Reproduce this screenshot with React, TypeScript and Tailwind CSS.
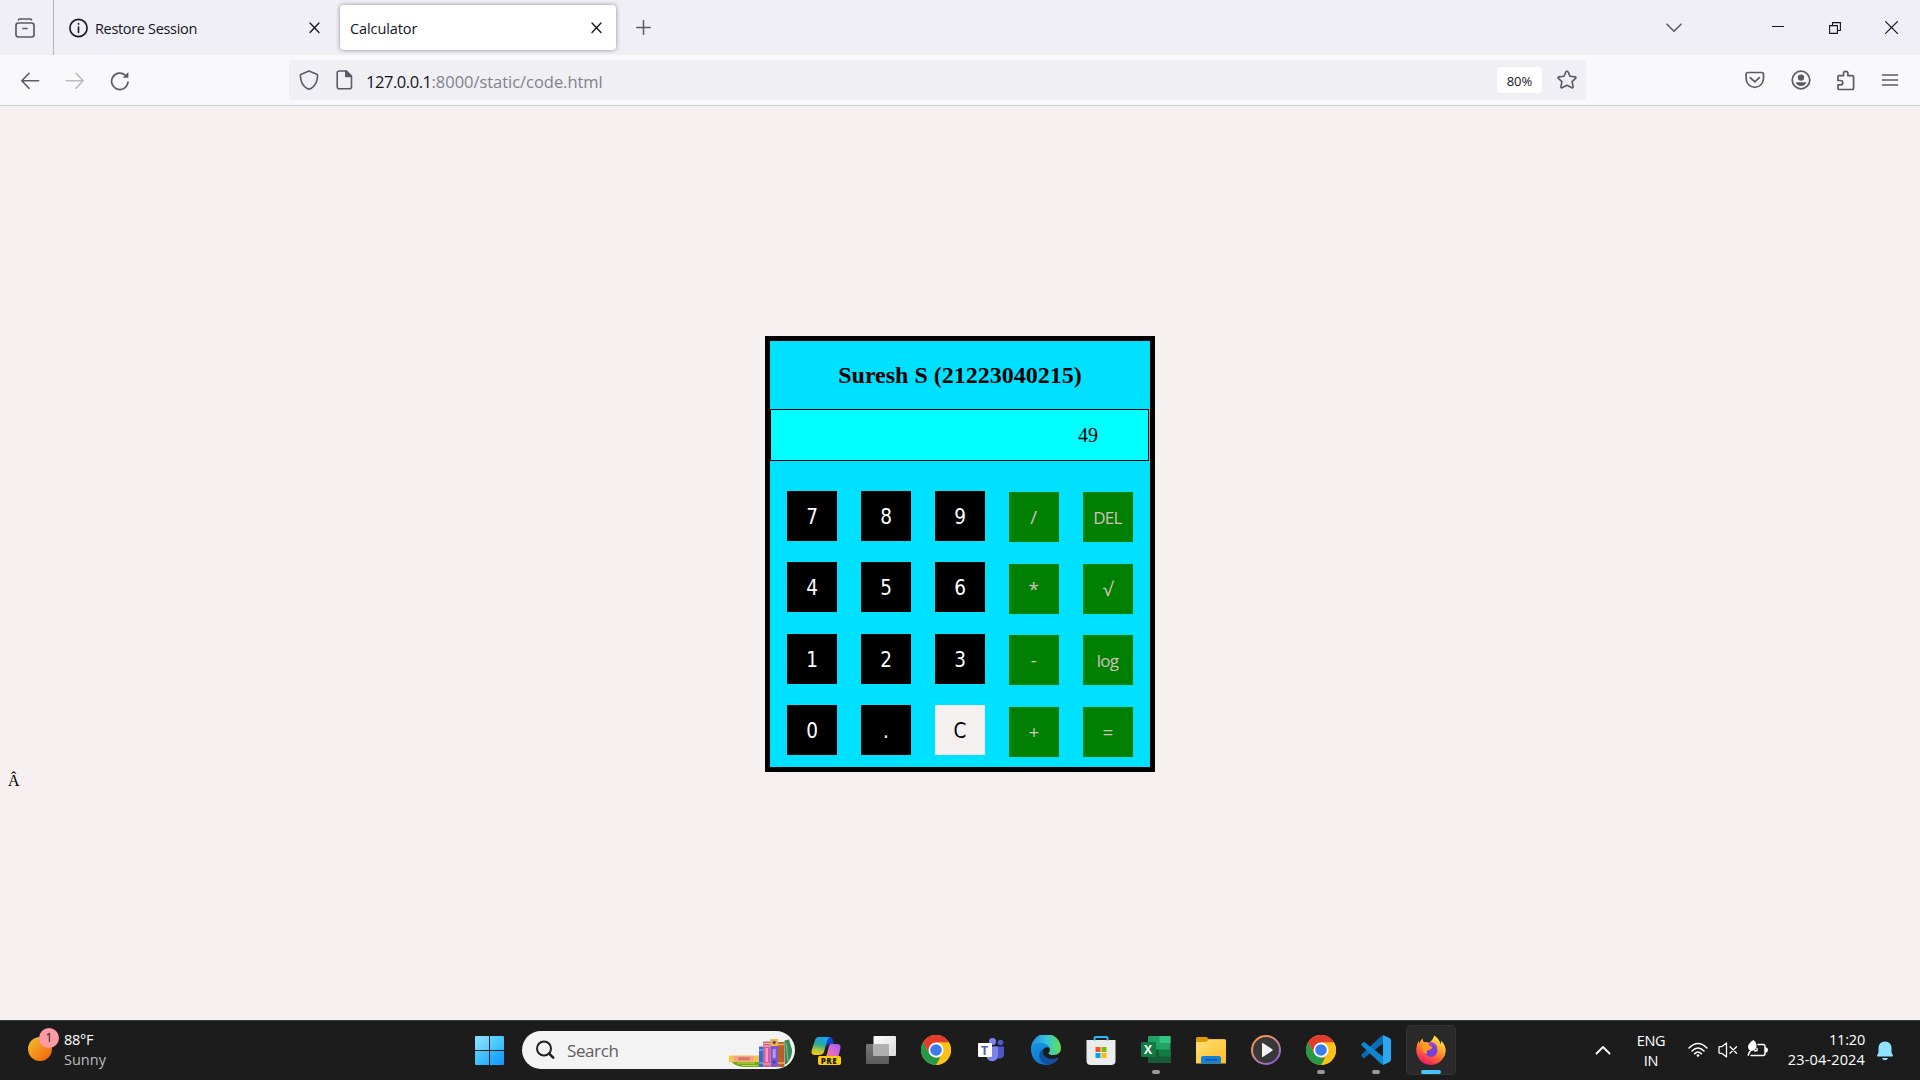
import React from "react";

type IconProps = { w: number; h: number; className?: string; children: React.ReactNode; sw?: number };

function Icon({ w, h, className = "", children, sw = 1.5 }: IconProps) {
  return (
    <svg
      width={w}
      height={h}
      viewBox={`0 0 ${w} ${h}`}
      className={`block shrink-0 ${className}`}
      fill="none"
      stroke="currentColor"
      strokeWidth={sw}
      strokeLinecap="round"
      strokeLinejoin="round"
    >
      {children}
    </svg>
  );
}

function CloseIcon({ className }: { className: string }) {
  return (
    <Icon w={12} h={12} className={className} sw={1.3}>
      <path d="M1 1l9 9.500M10 1l-9 9.500" />
    </Icon>
  );
}

function TabStrip() {
  return (
    <div className="flex h-[55px] bg-[#f0eff5] text-[#15141a]">
      <div className="flex w-[54px] items-center border-r border-[#b4b3bb] pl-[15px] text-[#5b5b66]">
        <Icon w={20} h={20} sw={1.7}>
          <path d="M3.5 1.8q.3-.8 1.2-.8h10.6q.9 0 1.2.8" />
          <rect x="1" y="5" width="18" height="14" rx="2.4" />
          <path d="M8 10.5h4" />
        </Icon>
      </div>
      <div className="flex w-[282px] items-center pl-[15px]">
        <Icon w={20} h={20} sw={1.6}>
          <circle cx="9.5" cy="10" r="8.6" />
          <path d="M9.5 9v5.4M9.5 5.6v.5" />
        </Icon>
        <span className="ml-[6px] mt-[2px] text-[14.5px] leading-5 tracking-[-0.33px]">Restore Session</span>
        <CloseIcon className="ml-auto mr-[15px]" />
      </div>
      <div className="mb-[5px] ml-[4px] mt-[5px] flex w-[276px] items-center rounded-[4px] bg-white pl-[10px] shadow-[0_0_4px_rgba(100,100,110,0.7)]">
        <span className="mt-[2px] text-[14.5px] leading-5 tracking-[-0.1px]">Calculator</span>
        <CloseIcon className="ml-auto mr-[13px]" />
      </div>
      <div className="ml-[20px] flex items-center text-[#5b5b66]">
        <Icon w={15} h={15} sw={1.5}>
          <path d="M7.5.7v13.6M.7 7.5h13.6" />
        </Icon>
      </div>
      <div className="ml-auto flex items-center pr-[22px]">
        <Icon w={18} h={10} className="text-[#5b5b66]" sw={1.6}>
          <path d="M2 1.2l7 7 7-7" />
        </Icon>
        <Icon w={12} h={3} className="ml-[89px]" sw={1}>
          <path d="M0 .5h12" strokeLinecap="butt" />
        </Icon>
        <Icon w={12} h={12} className="ml-[45px]" sw={1.1}>
          <path d="M.6 3.6h7.8v7.8H.6zM3.5 3.5V.6h7.9v7.9H8.5" strokeLinejoin="miter" />
        </Icon>
        <Icon w={13} h={13} className="ml-[44px]" sw={1.2}>
          <path d="M.6.6l11.8 11.8M12.4.6L.6 12.4" />
        </Icon>
      </div>
    </div>
  );
}

function NavBar() {
  return (
    <div className="flex h-[51px] items-center border-b border-[#cfcfd8] bg-[#f9f9fc] pl-[20px] text-[#5b5b66]">
      <Icon w={20} h={18} sw={1.6}>
        <path d="M9 2.300L1.800 9.800 9 17.300M2 9.800h16.600" />
      </Icon>
      <Icon w={20} h={18} sw={1.6} className="ml-[25px] text-[#bcbcc3]">
        <path d="M11 2.300l7.200 7.500-7.200 7.500M18 9.800H1.400" />
      </Icon>
      <Icon w={20} h={20} sw={1.7} className="ml-[25px] mt-px">
        <path d="M18 11a8.200 8.200 0 1 1-2.600-6.700" />
        <path d="M18.400 1v5.700h-5.700z" fill="currentColor" stroke="none" />
      </Icon>
      <div className="ml-[159px] flex h-[40px] w-[1297px] items-center rounded-[4px] bg-[#f0eff4] pl-[10px]">
        <Icon w={20} h={20} sw={1.6}>
          <path d="M10 1l7.8 3.2q.9.5.8 1.6-.3 9-6.7 12.7-1.9 1-3.8 0Q1.700 14.800 1.400 5.800q-.1-1.100.8-1.600z" />
        </Icon>
        <Icon w={18} h={20} sw={1.6} className="ml-[17px]">
          <path d="M3.200 1h7.300l5 5v10.800q0 2-2 2H3.200q-2 0-2-2V3q0-2 2-2z" />
          <path d="M9.800 1.200v5.300h5.400z" fill="currentColor" />
        </Icon>
        <span className="ml-[12px] mt-[4px] flex whitespace-nowrap text-[16.5px] leading-6">
          <span className="tracking-[-0.45px] text-[#15141a]">127.0.0.1</span>
          <span className="tracking-[-0.04px] text-[#82818a]">:8000/static/code.html</span>
        </span>
        <span className="ml-auto flex h-[26px] w-[45px] items-center justify-center rounded-[4px] bg-white pt-[1px] text-[13px] leading-5 text-[#15141a]">
          80%
        </span>
        <Icon w={22} h={20} className="ml-[14px] mr-[8px]" sw={1.6}>
          <path d="M11 1.200q.9 0 1.200.9l1.900 4.200 4.900.6q1.500.3.6 1.500l-3.500 3.300 1 5q.2 1.500-1.200 1L11 15.200l-4.900 2.500q-1.400.5-1.200-1l1-5-3.500-3.300q-.9-1.200.6-1.500l4.900-.6 1.900-4.200q.3-.9 1.200-.9z" />
        </Icon>
      </div>
      <Icon w={20} h={18} className="ml-[159px]" sw={1.7}>
        <path d="M3 1.500h13.600q1.900 0 1.900 1.900v4.200a8.700 8.700 0 0 1-17.400 0V3.400q0-1.900 1.900-1.900z" />
        <path d="M5.300 6.600l4.500 4.200 4.500-4.200" />
      </Icon>
      <Icon w={20} h={20} className="ml-[26px]" sw={1.7}>
        <circle cx="10" cy="10" r="8.800" />
        <circle cx="10" cy="7.600" r="3.200" fill="currentColor" stroke="none" />
        <path d="M4.600 12.300h10.800q-1.100 3.700-5.400 3.700t-5.400-3.700z" fill="currentColor" stroke="none" />
      </Icon>
      <Icon w={20} h={21} className="ml-[25px]" sw={1.700}>
        <path d="M2 9.500V6.700q0-1 1-1h4.500V3.500a2.200 2.200 0 0 1 4.400 0v2.200h4q1.700 0 1.700 1.700v10.400q0 1.700-1.700 1.700H3q-1 0-1-1v-3.600h2.600a2.200 2.200 0 0 0 0-4.400H2z" />
      </Icon>
      <Icon w={18} h={14} className="-mt-[1px] ml-[25px]" sw={1.600}>
        <path d="M1.500 2h15M1.500 7h15M1.500 12h15" />
      </Icon>
    </div>
  );
}

const digitRows = [
  { top: "mt-0", keys: ["7", "8", "9"] },
  { top: "mt-[21px]", keys: ["4", "5", "6"] },
  { top: "mt-[22px]", keys: ["1", "2", "3"] },
  { top: "mt-[21px]", keys: ["0", ".", "C"] },
];
const operatorRows = [
  { top: "mt-[1px]", keys: ["/", "DEL"] },
  { top: "mt-[22px]", keys: ["*", "√"] },
  { top: "mt-[21px]", keys: ["-", "log"] },
  { top: "mt-[22px]", keys: ["+", "="] },
];

function Calculator() {
  return (
    <div className="h-[436px] w-[390px] border-[5px] border-black bg-[#00e1ff]">
      <h1 className="h-[68px] pt-[20px] text-center font-['Liberation_Serif',serif] text-[24px] font-bold leading-[28px]">
        Suresh S (21223040215)
      </h1>
      <div className="flex h-[52px] w-[379px] items-center justify-end border border-black bg-[#00ffff] pr-[50px] font-['Liberation_Serif',serif] text-[20px]">
        49
      </div>
      <div className="flex gap-[24px] pl-[17px] pt-[30px]">
        <div>
          {digitRows.map((row) => (
            <div key={row.keys[0]} className={`flex gap-[24px] ${row.top}`}>
              {row.keys.map((k) => (
                <span
                  key={k}
                  className={`flex size-[50px] items-center justify-center pt-[2px] font-['DejaVu_Sans_Condensed','DejaVu_Sans',sans-serif] text-[20.5px] leading-6 [font-stretch:condensed] ${
                    k === "C" ? "bg-[#f5f0f0] text-black" : "bg-black text-white"
                  }`}
                >
                  {k}
                </span>
              ))}
            </div>
          ))}
        </div>
        <div>
          {operatorRows.map((row) => (
            <div key={row.keys[0]} className={`flex gap-[24px] ${row.top}`}>
              {row.keys.map((k) => (
                <span
                  key={k}
                  className={`flex size-[50px] items-center justify-center bg-[#008000] pr-[1px] tracking-[-0.7px] text-[#d3bfbf] ${
                    k.length > 1 ? "pt-[2px] text-[17px]" : "text-[19px]"
                  }`}
                >
                  {k}
                </span>
              ))}
            </div>
          ))}
        </div>
      </div>
    </div>
  );
}

function Chrome() {
  return (
    <svg viewBox="0 0 30 30" className="size-[30px]">
      <circle cx="15" cy="15" r="15" fill="#fbc116" />
      <path d="M2 7.500A15 15 0 0 1 28 7.500H15L8.500 18.700z" fill="#e33b2e" />
      <path d="M2 7.500L8.500 18.700 15 22.500h6.500L15 30A15 15 0 0 1 2 7.500z" fill="#279847" />
      <path d="M28 7.500A15 15 0 0 1 15 30l6.500-11.200L20 10l-5-2.500z" fill="#fbc116" />
      <circle cx="15" cy="15" r="7.500" fill="#fff" />
      <circle cx="15" cy="15" r="5.800" fill="#3b7ded" />
    </svg>
  );
}

function Copilot() {
  return (
    <div className="relative size-[30px]">
      <svg viewBox="0 0 30 30" className="size-[30px]">
        <defs>
          <linearGradient id="cpA" x1="0.500" y1="0" x2="0.300" y2="1">
            <stop offset="0" stopColor="#16a5ee" />
            <stop offset=".4" stopColor="#2aa79b" />
            <stop offset=".75" stopColor="#b5c93a" />
            <stop offset="1" stopColor="#f8c90c" />
          </linearGradient>
          <linearGradient id="cpB" x1="1" y1="0" x2="0" y2="1">
            <stop offset="0" stopColor="#9a5df5" />
            <stop offset=".5" stopColor="#d96ad0" />
            <stop offset="1" stopColor="#ff8a5c" />
          </linearGradient>
        </defs>
        <path d="M15 2h3q3 0 4 3l1 4h-4q-3 0-4 4z" fill="#0b47c9" />
        <path d="M8 2h11q-2 1-3 4l-3 11q-1 3-5 3H4q-4 0-3.500-4L4 5q1-3 4-3z" fill="url(#cpA)" />
        <path d="M20 9h6q4 0 3.500 4L27 23H13q2-1 3-4l2-8q.5-2 2-2z" fill="url(#cpB)" />
      </svg>
      <span className="absolute left-[7px] top-[21px] flex h-[9px] w-[23px] items-center justify-center rounded-[2px] bg-[#ffcb0a] text-[8px] font-extrabold leading-[9px] tracking-[0.5px] text-[#1b1b1b]">
        PRE
      </span>
    </div>
  );
}

function TaskView() {
  return (
    <svg viewBox="0 0 30 30" className="size-[30px]">
      <defs>
        <linearGradient id="tvA" x1="0" y1="0" x2="1" y2="1">
          <stop offset="0" stopColor="#fff" />
          <stop offset="1" stopColor="#dadada" />
        </linearGradient>
        <linearGradient id="tvB" x1="0" y1="0" x2="0" y2="1">
          <stop offset="0" stopColor="#777" />
          <stop offset="1" stopColor="#5a5a5a" />
        </linearGradient>
      </defs>
      <rect x="0" y="9" width="23" height="20" rx="1" fill="url(#tvB)" />
      <rect x="7.500" y="1" width="22.500" height="20" rx="1" fill="url(#tvA)" />
      <rect x="7.500" y="9" width="15.500" height="12" fill="#b0b0b0" />
    </svg>
  );
}

function Teams() {
  return (
    <div className="relative size-[30px]">
      <svg viewBox="0 0 30 30" className="size-[30px]">
        <circle cx="24.500" cy="7.500" r="2.800" fill="#5059c9" />
        <path d="M17 11.500h11V19q0 4-4 4.500h-4z" fill="#4f57c7" />
        <circle cx="16.500" cy="6.500" r="3.600" fill="#7b83eb" />
        <path d="M10 11.500h12V20q0 6-6 6.300-5-.3-5.500-5z" fill="#7b83eb" />
        <rect x="2" y="8" width="14" height="14" rx="1" fill="#fff" />
      </svg>
      <span className="absolute left-[2px] top-[8px] w-[14px] text-center text-[13px] font-bold leading-[14px] text-[#5b5fc7]">T</span>
    </div>
  );
}

function Edge() {
  return (
    <svg viewBox="0 0 30 30" className="size-[30px]">
      <defs>
        <linearGradient id="edA" x1="0" y1=".3" x2="1" y2=".3">
          <stop offset="0" stopColor="#1f8ae0" />
          <stop offset=".5" stopColor="#33c3e0" />
          <stop offset="1" stopColor="#66e04f" />
        </linearGradient>
        <linearGradient id="edB" x1="0" y1="0" x2=".6" y2="1">
          <stop offset="0" stopColor="#1595dd" />
          <stop offset="1" stopColor="#0f6fd0" />
        </linearGradient>
      </defs>
      <path d="M0 14.500A15 15 0 0 1 30 13q0 6.500-7.500 7-5 0-5-2 2.500-2.300.6-5.500-3-3.500-8-2Q3 12 0 17z" fill="url(#edA)" />
      <path d="M0 15Q1 8 9 8q7 0 9.500 4.500Q13 11 11.500 16q-.8 7 6.500 9.500 5 1.300 9-2Q23 30 15 30 1 29 0 15z" fill="url(#edB)" />
      <path d="M11.800 14Q6 19 9.500 25q3.500 5 9.500 4.500 6-2 8.600-6.500.2-.8-.7-.5-7 3.300-12-.5-4-3-3.100-8z" fill="#11509f" />
    </svg>
  );
}

function Store() {
  return (
    <svg viewBox="0 0 30 30" className="size-[30px]">
      <path d="M.5 5h29v20.500q0 4.500-4.500 4.500H5q-4.500 0-4.500-4.500z" fill="#ececec" />
      <path d="M8.500 5.500V2.800Q8.500 2 9.300 2h11.400q.8 0 .8.8v2.700" fill="none" stroke="#2bb4ee" strokeWidth="2" />
      <rect x="9.500" y="12" width="5" height="5" fill="#f25022" />
      <rect x="15.500" y="12" width="5" height="5" fill="#7fba00" />
      <rect x="9.500" y="18" width="5" height="5" fill="#00a4ef" />
      <rect x="15.500" y="18" width="5" height="5" fill="#ffb900" />
    </svg>
  );
}

function Excel() {
  return (
    <div className="relative size-[30px]">
      <svg viewBox="0 0 30 30" className="size-[30px]">
        <rect x="7" y="1" width="22.500" height="27" rx="1.200" fill="#21a366" />
        <path d="M18.500 1h10q1 0 1 1v6h-11z" fill="#33c481" />
        <path d="M7 14.500h11.500V22H7z" fill="#185c37" />
        <path d="M18.500 14.500h11V22h-11z" fill="#107c41" />
        <path d="M7 21.500h22.500V27q0 1-1 1H8q-1 0-1-1z" fill="#185c37" />
        <rect x="0" y="7" width="15" height="15" rx="1.200" fill="#107c41" />
      </svg>
      <span className="absolute left-0 top-[7px] w-[15px] text-center text-[12px] font-bold leading-[15px] text-white">X</span>
    </div>
  );
}

function Folder() {
  return (
    <svg viewBox="0 0 30 30" className="size-[30px]">
      <defs>
        <linearGradient id="foA" x1="0" y1="0" x2="1" y2="1">
          <stop offset="0" stopColor="#ffe07a" />
          <stop offset="1" stopColor="#fdbd22" />
        </linearGradient>
      </defs>
      <path d="M0 3.500Q0 2 1.500 2H10q1 0 1.800 1L13 4h15.500q1.500 0 1.500 1.500V14H0z" fill="#dd9c05" />
      <path d="M0 7h10l3-2.500h15.500q1.500 0 1.500 1.500v22q0 .5-.5.5H.5Q0 28.500 0 28z" fill="url(#foA)" />
      <path d="M5 28.500V23q0-2 2-2h16q2 0 2 2v5.500z" fill="#1480d8" />
      <path d="M9 24.800h12" stroke="#0b4f93" strokeWidth="1.200" />
    </svg>
  );
}

function MediaPlayer() {
  return (
    <svg viewBox="0 0 30 30" className="size-[30px]">
      <defs>
        <linearGradient id="mpA" x1="0" y1="0" x2=".7" y2="1">
          <stop offset="0" stopColor="#ff9b3d" />
          <stop offset=".5" stopColor="#d98a8a" />
          <stop offset="1" stopColor="#8d62d6" />
        </linearGradient>
      </defs>
      <circle cx="15" cy="15" r="14" fill="#383838" stroke="url(#mpA)" strokeWidth="2" />
      <path d="M11 8.800q0-1.300 1.200-.6l9 6q1 .8 0 1.600l-9 6q-1.200.7-1.200-.6z" fill="#f4f4f4" />
    </svg>
  );
}

function VSCode() {
  return (
    <svg viewBox="0 0 30 30" className="size-[30px]">
      <path d="M22 8.500L3.500 22.700q-.6.500-1.200 0L.6 21.200q-.8-.8 0-1.600L20.500.8 24 3z" fill="#0d6cb4" />
      <path d="M22 21.500L3.500 7.300q-.6-.5-1.200 0L.6 8.800q-.8.800 0 1.600l19.900 18.800L24 27z" fill="#0f86d2" />
      <path d="M20.500.8q.8-1 2-.5l6 2.700q1.500.8 1.500 2.200v19.600q0 1.400-1.500 2.200l-6 2.700q-1.200.5-2-.5 1.500 1 1.500-1V1.800q0-2-1.500-1z" fill="#29a7f2" />
    </svg>
  );
}

function Firefox() {
  return (
    <svg viewBox="0 0 30 30" className="size-[30px]">
      <defs>
        <linearGradient id="ffA" x1=".8" y1="0" x2=".3" y2="1">
          <stop offset="0" stopColor="#fff04a" />
          <stop offset=".35" stopColor="#ffb02e" />
          <stop offset=".65" stopColor="#ff6434" />
          <stop offset="1" stopColor="#f0146b" />
        </linearGradient>
      </defs>
      <path d="M18.500.5q5 4 6 8.500 1-1 .8-3.500 8 9.500 1.700 18-4.500 6.500-12 6.500Q5 29.500 1.500 21-1.500 13 2.600 6q.5 1.500 1.200 2 .2-3 2.800-4.500 0 2.500 1.600 3.700 3-.4 4.800.5Q17 5 18.500.5z" fill="url(#ffA)" />
      <circle cx="15" cy="15.500" r="6.500" fill="#7a3fd6" />
      <path d="M11.500 8q5-2.500 9 2 1 2 .5 4-1.500-4-5-4.500z" fill="#a53fe0" />
      <path d="M5 10.500q4-2.500 6.500-1l5 2.500q-.5 2.500-4.500 3-2 1.500-1 4-4-1-4.500-5z" fill="#ff9a1f" />
    </svg>
  );
}

function Books() {
  return (
    <svg viewBox="0 0 64 29" width="64" height="29" className="block">
      <path d="M2 22h29v6H14Q5 27 2 22z" fill="#74a51f" />
      <path d="M8 24h18M13 26.500h16" stroke="#b7d84e" strokeWidth="1" />
      <rect x="0" y="16.500" width="31" height="6.500" rx="1" fill="#f3c548" />
      <rect x="5" y="17" width="20" height="5.500" rx="1" fill="#f2a48c" />
      <rect x="9" y="18.300" width="12" height="3" rx="1.500" fill="#dd7466" />
      <rect x="30" y="7.500" width="4" height="20.500" fill="#2f6fd6" />
      <path d="M30 11h4M30 24h4" stroke="#8fc0ff" />
      <rect x="34" y="2.500" width="7.500" height="25.500" rx=".8" fill="#d55b9d" />
      <path d="M34 4.500h7.500M34 7h7.500M34 25h7.500" stroke="#f7c86b" strokeWidth="1" />
      <rect x="36.500" y="9" width="2.500" height="14" fill="#ee9cc8" />
      <rect x="41.500" y="0" width="7.500" height="28" rx=".8" fill="#7957cc" />
      <rect x="41.500" y="0" width="7.500" height="7" fill="#f3b93c" />
      <path d="M45.200 1.500l2 2-2 2-2-2zM45.200 21l2 2-2 2-2-2z" fill="#5137a8" />
      <rect x="43.700" y="10" width="3" height="9" fill="#b29be8" />
      <rect x="49" y="3" width="6.500" height="25" rx=".8" fill="#b7602c" />
      <path d="M49 5.500h6.500M49 24h6.500" stroke="#f0ae5a" strokeWidth="1.500" />
      <path d="M55.500 1.500l4.500-1 3 10q.5 8-5.500 14.500l-1.500.5z" fill="#3b8a5a" />
      <path d="M57 4l2 18" stroke="#7fc595" strokeWidth="1" />
    </svg>
  );
}

const apps: { name: string; icon: React.ReactNode; state?: "open" | "active" }[] = [
  { name: "copilot", icon: <Copilot /> },
  { name: "taskview", icon: <TaskView /> },
  { name: "chrome", icon: <Chrome /> },
  { name: "teams", icon: <Teams /> },
  { name: "edge", icon: <Edge /> },
  { name: "store", icon: <Store /> },
  { name: "excel", icon: <Excel />, state: "open" },
  { name: "folder", icon: <Folder /> },
  { name: "player", icon: <MediaPlayer /> },
  { name: "chrome2", icon: <Chrome />, state: "open" },
  { name: "vscode", icon: <VSCode />, state: "open" },
  { name: "firefox", icon: <Firefox />, state: "active" },
];

function Taskbar() {
  return (
    <div className="flex h-[60px] border-t border-[#3a3c3c] bg-[#1c1c1c] text-white">
      <div className="flex w-[475px] pl-[28px] pt-[6px]">
        <div className="relative h-[36px] w-[32px]">
          <span className="absolute left-0 top-[10px] size-[24px] rounded-full bg-linear-to-br from-[#f0c030] to-[#f05a08]" />
          <span className="absolute left-[11px] top-[1px] flex size-[20px] items-center justify-center rounded-full bg-[#ff99a4] text-[12px] leading-none text-[#1b1b1b]">
            1
          </span>
        </div>
        <div className="ml-[4px] mt-[3px] text-[14.5px] leading-[20px]">
          <div className="tracking-[-0.3px]">88°F</div>
          <div className="text-[#bdbdbd]">Sunny</div>
        </div>
      </div>
      <div className="mt-[15px] grid size-[29px] grid-cols-2 gap-px overflow-hidden rounded-[1px]">
        <span className="bg-linear-to-br from-[#8be0ff] to-[#5ccbfc]" />
        <span className="bg-linear-to-br from-[#62d8ff] to-[#33b5fa]" />
        <span className="bg-linear-to-br from-[#52cdff] to-[#27acfb]" />
        <span className="bg-linear-to-br from-[#30b7fc] to-[#1297fb]" />
      </div>
      <div className="ml-[18px] mt-[10px] flex h-[38px] w-[273px] overflow-hidden rounded-full bg-[#f3f3f3] pl-[14px]">
        <Icon w={19} h={20} className="mt-[9px] text-[#222]" sw={2}>
          <circle cx="8" cy="8.500" r="7" />
          <path d="M13.200 13.700l4 4" strokeWidth="2.600" />
        </Icon>
        <span className="ml-[12px] mt-[8px] text-[17px] leading-6 tracking-[-0.4px] text-[#606060]">Search</span>
        <div className="ml-auto mr-[2px] mt-[8px]">
          <Books />
        </div>
      </div>
      <div className="flex">
        {apps.map((a) => (
          <div key={a.name} className="flex w-[55px] justify-center pt-[4px] first:ml-[3px]">
            <div
              className={`flex h-[50px] w-[50px] flex-col items-center rounded-[5px] pt-[10px] ${
                a.state === "active" ? "bg-[#292929] ring-1 ring-inset ring-[#333]" : ""
              }`}
            >
              {a.icon}
              {a.state === "open" && <span className="mt-[5px] h-[4px] w-[8px] rounded-full bg-[#999]" />}
              {a.state === "active" && <span className="mt-[5px] h-[4px] w-[20px] rounded-full bg-[#4cc2ff]" />}
            </div>
          </div>
        ))}
      </div>
      <div className="ml-auto flex pr-[26px]">
        <Icon w={16} h={10} className="mt-[24px]" sw={1.800}>
          <path d="M1.500 8.500L8 2l6.500 6.500" />
        </Icon>
        <div className="ml-[23px] mt-[10px] w-[34px] text-center text-[14.5px] leading-[20px] tracking-[-0.3px]">
          <div>ENG</div>
          <div>IN</div>
        </div>
        <Icon w={20} h={16} className="ml-[20px] mt-[21px]" sw={1.500}>
          <path d="M1 6q9-9 18 0M4 9q6-6 12 0M6.600 11.800q3.400-3.500 6.800 0" />
          <circle cx="10" cy="13.500" r="1.300" fill="currentColor" stroke="none" />
        </Icon>
        <Icon w={20} h={16} className="ml-[10px] mt-[21px]" sw={1.300}>
          <path d="M1 5.500q0-.8.800-.8h2L8.500 1v14l-4.700-3.700h-2q-.8 0-.8-.8zM12 4.800l6.500 6.500M18.500 4.800L12 11.300" />
        </Icon>
        <Icon w={21} h={18} className="ml-[9px] mt-[18px]" sw={1.400}>
          <path d="M11 5.500h5q2 0 2 2v7q0 2-2 2H4" />
          <path d="M18.500 9q1.800.2 1.800 2t-1.800 2z" fill="currentColor" />
          <path d="M6.500 1q3.500 3 3 6.500-.5 3.500-4.500 4.500-4-.5-4-4.500Q1.500 4 6.500 1z" fill="currentColor" stroke="none" />
          <path d="M1.200 16.200q.5-3 4-6.200M10 9.500v2.300H7.500" />
        </Icon>
        <div className="ml-[15px] mt-[9px] w-[82px] text-right text-[14.5px] leading-[20px]">
          <div className="tracking-[-0.2px]">11:20</div>
          <div className="tracking-[0.15px]">23-04-2024</div>
        </div>
        <svg viewBox="0 0 18 20" width="18" height="20" className="ml-[11px] mt-[20px]">
          <path d="M9 .5q6.300.3 6.500 6.500v4.500l1.500 3q.2 1-.8 1H1.800q-1 0-.8-1l1.500-3V7Q2.700.8 9 .5z" fill="#8fe3ff" />
          <path d="M6 17h6q-.8 2.300-3 2.300T6 17z" fill="#8fe3ff" />
        </svg>
      </div>
    </div>
  );
}

export default function App() {
  return (
    <div className="flex h-[1080px] w-[1920px] flex-col overflow-hidden font-['Open_Sans','Noto_Sans',sans-serif]">
      <TabStrip />
      <NavBar />
      <main className="flex flex-1 flex-col items-center bg-[#f6f0f0] pt-[230px]">
        <Calculator />
        <p className="self-start pl-[8px] font-['Liberation_Serif',serif] text-[16px] leading-[18px]">Â</p>
      </main>
      <Taskbar />
    </div>
  );
}
